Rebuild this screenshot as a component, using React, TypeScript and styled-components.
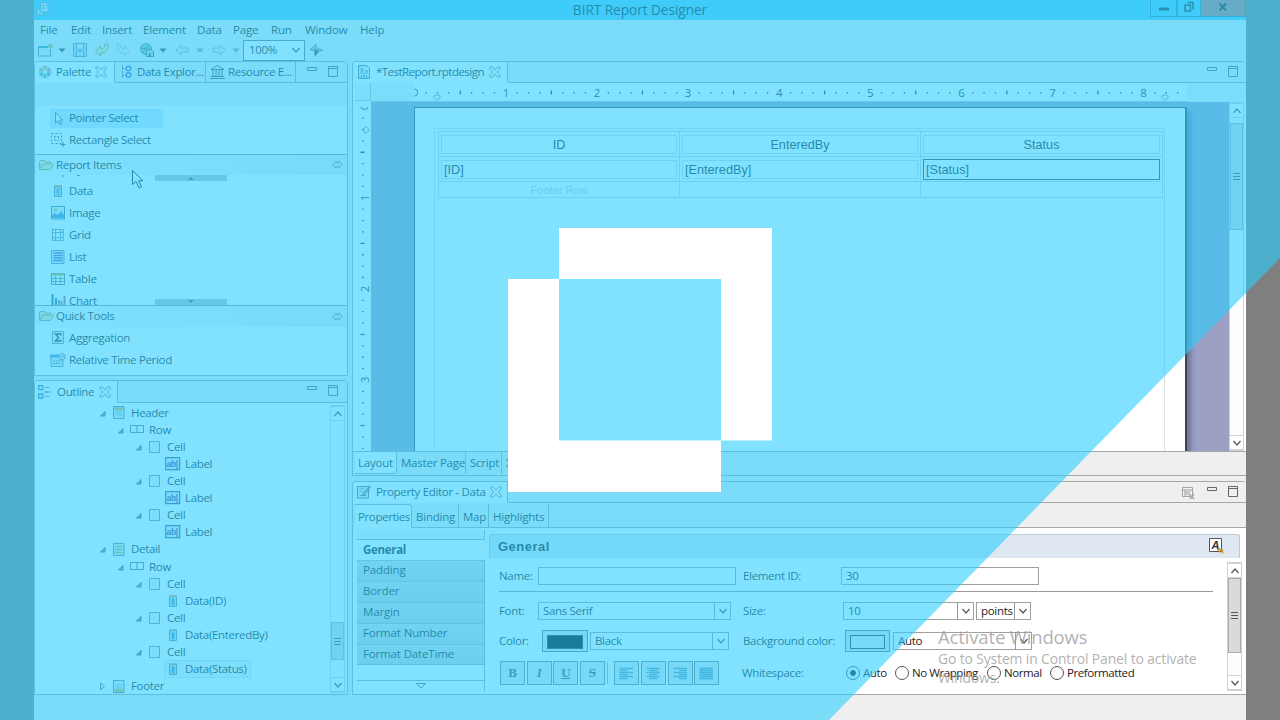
import React from "react";
import styled, { createGlobalStyle, css } from "styled-components";

const GlobalStyle = createGlobalStyle`
  * { box-sizing: border-box; }
  body { margin: 0; overflow: hidden; background: #808080; }
`;

const line = "#a3a8ab";
const chrome = "#efefef";
const ink = "#1f2326";

const Screen = styled.div`
  position: relative;
  width: 1280px;
  height: 720px;
  overflow: hidden;
  display: flex;
  justify-content: center;
  background: #7f7f7f;
  color: ${ink};
  font: 11.5px/16px "Open Sans", "Noto Sans", sans-serif;
  letter-spacing: -0.32px;
  white-space: nowrap;
`;
const Window = styled.div`
  width: 1212px;
  height: 720px;
  display: flex;
  flex-direction: column;
  background: ${chrome};
`;

const TitleBar = styled.header`
  height: 20px;
  display: flex;
  justify-content: space-between;
  background: #5fc8f5;
`;
const TitleSide = styled.div<{ $end?: boolean }>`
  width: 96px;
  display: flex;
  padding: ${(p) => (p.$end ? "0" : "1px 0 0 2px")};
`;
const TitleText = styled.h1`
  margin: 0;
  font-size: 13.7px;
  line-height: 19px;
  font-weight: 400;
  letter-spacing: -0.07px;
`;
const WinButton = styled.div<{ $w: number; $close?: boolean }>`
  width: ${(p) => p.$w}px;
  height: 17px;
  display: flex;
  align-items: center;
  justify-content: center;
  padding-bottom: 2px;
  border: 1px solid #3c86a5;
  border-width: 0 1px 1px ${(p) => (p.$close ? 0 : 1)}px;
  background: ${(p) => (p.$close ? "#bd7872" : "transparent")};
`;

const MenuBar = styled.nav`
  height: 20px;
  display: flex;
  padding-left: 6px;
  line-height: 20px;
  letter-spacing: -0.15px;
`;
const MenuItem = styled.span<{ $w: number }>`
  width: ${(p) => p.$w}px;
`;
const ToolBar = styled.div`
  height: 21px;
  display: flex;
  align-items: center;
  padding: 0 0 1px 4px;
`;
const Tool = styled.span<{ $w: number; $faded?: boolean }>`
  width: ${(p) => p.$w}px;
  height: 16px;
  display: flex;
  opacity: ${(p) => (p.$faded ? 0.55 : 1)};
`;
const ZoomCombo = styled.div`
  width: 62px;
  height: 21px;
  flex: none;
  display: flex;
  align-items: center;
  justify-content: space-between;
  padding: 0 3px 1px 5px;
  margin-right: 4px;
  border: 1px solid #777;
  background: #fff;
`;

const Body = styled.main`
  height: 634px;
  display: flex;
  gap: 4px;
`;
const Column = styled.div<{ $w: number; $gap: number }>`
  width: ${(p) => p.$w}px;
  display: flex;
  flex-direction: column;
  gap: ${(p) => p.$gap}px;
`;
const Panel = styled.section<{ $h: number; $open?: boolean }>`
  height: ${(p) => p.$h}px;
  display: flex;
  flex-direction: column;
  border: 1px solid ${line};
  border-right-width: ${(p) => (p.$open ? 0 : 1)}px;
  border-radius: 4px 4px 0 0;
  background: #fff;
  overflow: hidden;
`;
const TabStrip = styled.div<{ $tall?: boolean }>`
  height: ${(p) => (p.$tall ? 22 : 21)}px;
  flex: none;
  display: flex;
  background: ${chrome};
`;
const Tab = styled.div<{ $w: number; $active?: boolean; $indent?: number; $gap?: number; $tight?: boolean }>`
  width: ${(p) => p.$w}px;
  display: flex;
  align-items: center;
  gap: ${(p) => p.$gap ?? 4}px;
  padding: 0 0 0 ${(p) => p.$indent ?? 5}px;
  letter-spacing: ${(p) => (p.$tight ? "-0.53px" : "inherit")};
  border-right: 1px solid ${line};
  border-bottom: 1px solid ${(p) => (p.$active ? "transparent" : line)};
  background: ${(p) => (p.$active ? "#fff" : "transparent")};
`;
const TabFill = styled.div<{ $pad: number }>`
  flex: 1;
  display: flex;
  justify-content: flex-end;
  gap: 11px;
  padding: 4px ${(p) => p.$pad}px 0 0;
  border-bottom: 1px solid ${line};
`;

const PaletteTop = styled.div`
  height: 23px;
  flex: none;
  background: ${chrome};
`;
const PaletteRow = styled.div<{ $selected?: boolean }>`
  width: 113px;
  height: ${(p) => (p.$selected ? 19 : 21.85)}px;
  flex: none;
  display: flex;
  align-items: center;
  gap: 3px;
  margin: ${(p) => (p.$selected ? "3px 0 1px 15px" : "0 0 0 15px")};
  padding-bottom: ${(p) => (p.$selected ? 1 : 0)}px;
  background: ${(p) => (p.$selected ? "#d6e9fb" : "transparent")};
`;
const PaletteGap = styled.div`
  height: 3px;
  flex: none;
`;
const DrawerHead = styled.div<{ $h: number }>`
  height: ${(p) => p.$h}px;
  flex: none;
  display: flex;
  align-items: center;
  gap: 2px;
  padding: 0 4px 0 4px;
  border-top: 1px solid #8f979c;
  background: linear-gradient(90deg, #fafafa, #e9edf0);
`;
const Grow = styled.span`
  flex: 1;
`;
const DrawerBody = styled.div`
  height: 130px;
  flex: none;
  display: flex;
  flex-direction: column;
  position: relative;
  overflow: hidden;
`;
const DrawerShift = styled.div`
  margin-top: -16.3px;
`;
const ScrollPad = styled.div<{ $bottom?: boolean }>`
  position: absolute;
  left: 120px;
  ${(p) => (p.$bottom ? "bottom: 0" : "top: 0")};
  width: 72px;
  height: 6px;
  display: flex;
  align-items: center;
  justify-content: center;
  background: #b9bfc4;
`;

const OutlineBody = styled.div`
  height: 292px;
  display: flex;
  justify-content: space-between;
  padding: 2px 2px 0 0;
`;
const Tree = styled.div`
  margin-top: -0.7px;
`;
const TreeRow = styled.div<{ $depth: number }>`
  height: 17.08px;
  display: flex;
  align-items: center;
  padding-left: ${(p) => 63.5 + p.$depth * 18}px;
`;
const TreeArrow = styled.span`
  width: 12.5px;
  display: flex;
`;
const TreeItem = styled.span<{ $selected?: boolean }>`
  height: 16px;
  display: flex;
  align-items: center;
  padding-right: 3px;
  outline: ${(p) => (p.$selected ? "1px solid #dde1e4" : "none")};
  background: ${(p) => (p.$selected ? "#f4f5f6" : "transparent")};
`;
const TreeIcon = styled.span<{ $indent: number }>`
  width: 20px;
  display: flex;
  padding-left: ${(p) => p.$indent}px;
`;

const ScrollTrack = styled.div<{ $h: number; $mt?: number }>`
  width: 15px;
  height: ${(p) => p.$h}px;
  margin-top: ${(p) => p.$mt ?? 0}px;
  flex: none;
  display: flex;
  flex-direction: column;
  background: #fdfdfd;
  border: 1px solid #cfd3d6;
`;
const ScrollEnd = styled.div`
  height: 15px;
  flex: none;
  display: flex;
  align-items: center;
  justify-content: center;
  background: #fff;
  border: 1px solid #cfd3d6;
  border-width: 1px 0;
`;
const ScrollThumb = styled.div<{ $h: number; $top: number }>`
  height: ${(p) => p.$h}px;
  margin-top: ${(p) => p.$top}px;
  flex: none;
  display: flex;
  align-items: center;
  justify-content: center;
  border: 1px solid #a9adb0;
  background: #d9dadb;
`;

const EditorTop = styled.div`
  height: 19px;
  flex: none;
  display: flex;
  background: #fff;
`;
const EditorMid = styled.div`
  height: 349px;
  flex: none;
  display: flex;
`;
const Corner = styled.div`
  width: 16px;
  height: 18px;
  margin-left: 2px;
  background: #f3f5f6;
  border: 1px solid #b8bcc0;
  border-width: 0 1px 1px 0;
`;
const Canvas = styled.div`
  width: 858px;
  height: 349px;
  padding: 5px 0 0 43px;
  overflow: hidden;
  background: #9ba0c4;
`;
const Page = styled.div`
  width: 773px;
  height: 360px;
  padding: 20px 20px 0 19px;
  background: #fff;
  border: 2px solid #3f4450;
  border-width: 1px 2px 0 1px;
  box-shadow: 4px 4px 5px #6f7499;
`;
const PageMargin = styled.div`
  height: 360px;
  padding: 2px 1px 0 3px;
  border: 1px solid #dcdfe6;
`;
const ReportTable = styled.div`
  display: grid;
  grid-template-columns: 241px 241px 1fr;
  grid-template-rows: 25px 25px 15px;
  border: 1px solid #cdd1d9;
`;
const TableCell = styled.div<{ $last?: boolean }>`
  padding: 3px 2px 2px;
  border-right: ${(p) => (p.$last ? "0" : "1px solid #cdd1d9")};
  border-bottom: 1px solid #cdd1d9;
`;
const CellBox = styled.div<{ $center?: boolean; $selected?: boolean }>`
  height: ${(p) => (p.$selected ? 21 : 19)}px;
  margin-top: ${(p) => (p.$selected ? -1 : 0)}px;
  padding: 0 2px;
  border: ${(p) => (p.$selected ? "1px solid #444" : "1px solid #d3d7de")};
  text-align: ${(p) => (p.$center ? "center" : "left")};
  font: 12.7px/${(p) => (p.$selected ? 20 : 18)}px "Liberation Sans", Arial, sans-serif;
  letter-spacing: 0;
`;
const FooterCell = styled.div<{ $last?: boolean }>`
  border-right: ${(p) => (p.$last ? "0" : "1px solid #cdd1d9")};
  font: 10.7px/16px "Liberation Sans", Arial, sans-serif;
  letter-spacing: 0.2px;
  text-align: center;
  color: #c4c8cf;
`;

const EditorTabs = styled.div`
  height: 24px;
  display: flex;
  flex: none;
  padding-left: 2px;
  border-top: 1px solid ${line};
  background: ${chrome};
`;
const SmallTab = styled.div<{ $w: number; $active?: boolean; $top?: boolean }>`
  width: ${(p) => p.$w}px;
  height: ${(p) => (p.$top ? 24 : 22)}px;
  flex: none;
  padding-left: ${(p) => (p.$w === 30 ? 4 : 4)}px;
  line-height: ${(p) => (p.$top ? 25 : 22)}px;
  border-right: 1px solid ${line};
  letter-spacing: -0.22px;
  ${(p) =>
    p.$active &&
    css`
      background: #fff;
      border-radius: ${p.$top ? "0 4px 0 0" : "0 0 4px 0"};
      ${p.$top ? "line-height: 23px; padding-left: 3px; letter-spacing: -0.38px;" : "padding-left: 3px;"}
      border-${p.$top ? "top" : "bottom"}: 1px solid ${line};
    `}
  ${(p) => p.$top && !p.$active && css`border-bottom: 1px solid ${line};`}
`;
const SubTabs = styled.div`
  height: 25px;
  flex: none;
  display: flex;
  padding: 1px 0 0 2px;
  background: ${chrome};
`;
const SubFill = styled.div`
  flex: 1;
  border-bottom: 1px solid ${line};
`;
const PropBody = styled.div`
  height: 166px;
  display: flex;
  padding-left: 4px;
`;
const Categories = styled.div`
  width: 128px;
  height: 161px;
  flex: none;
  margin-top: 2px;
  display: flex;
  flex-direction: column;
  border-right: 1px solid ${line};
`;
const CatCap = styled.div`
  height: 10px;
  flex: none;
  background: #f6f6f6;
  border-bottom: 1px solid ${line};
`;
const Category = styled.div<{ $active?: boolean }>`
  height: 20.9px;
  flex: none;
  padding-left: 6px;
  line-height: 18px;
  letter-spacing: -0.15px;
  ${(p) =>
    p.$active
      ? css`height: 20px; line-height: 19px; font-weight: 700; width: 128px; background: #fff; letter-spacing: -0.3px;`
      : css`background: linear-gradient(#d9dcde, #c9cdd0); border-top: 1px solid #aeb3b6;`}
`;
const CatTail = styled.div`
  height: 17px;
  flex: none;
  border: 1px solid ${line};
  border-width: 1px 0;
`;
const CatMore = styled.div`
  display: flex;
  justify-content: center;
  padding-top: 2px;
`;

const Sheet = styled.div`
  width: 751px;
  margin-left: 4px;
  padding-top: 6px;
`;
const SheetHead = styled.div`
  height: 24px;
  display: flex;
  justify-content: space-between;
  padding: 3px 14px 0 8px;
  background: #dfe8f2;
  border: 1px solid #c2cad2;
  border-width: 1px 1px 0 1px;
  border-radius: 3px 3px 0 0;
`;
const SheetTitle = styled.h2`
  margin: 0;
  font: 700 13px/18px "Liberation Sans", Arial, sans-serif;
  letter-spacing: 0.5px;
`;
const SheetBody = styled.div`
  height: 136px;
  display: flex;
`;
const Form = styled.div`
  width: 724px;
  flex: none;
  margin-right: 14px;
  padding-left: 10px;
  display: flex;
  flex-direction: column;
`;
const FormRow = styled.div<{ $h: number; $rule?: boolean }>`
  height: ${(p) => p.$h}px;
  flex: none;
  display: flex;
  align-items: center;
  padding-top: ${(p) => (p.$rule ? 3 : 0)}px;
  border-bottom: ${(p) => (p.$rule ? "1px solid #9a9a9a" : "0")};
`;
const Label = styled.span<{ $w: number }>`
  width: ${(p) => p.$w}px;
  flex: none;
`;
const Field = styled.div<{ $w: number; $mr?: number }>`
  width: ${(p) => p.$w}px;
  height: 18px;
  flex: none;
  display: flex;
  justify-content: space-between;
  margin-right: ${(p) => p.$mr ?? 0}px;
  padding-left: 4px;
  line-height: 16px;
  border: 1px solid #a0a0a0;
  background: #fff;
`;
const DropButton = styled.span`
  width: 16px;
  display: flex;
  align-items: center;
  justify-content: center;
  border-left: 1px solid #999;
`;
const Swatch = styled.div<{ $fill: string; $w: number; $mr: number }>`
  width: ${(p) => p.$w}px;
  height: 22px;
  flex: none;
  padding: 4px;
  margin-right: ${(p) => p.$mr}px;
  border: 1px solid #777;
  background: #e4e6e8;
  &::before {
    content: "";
    display: block;
    height: 12px;
    border: 1px solid #333;
    background: ${(p) => p.$fill};
  }
`;
const FormatButton = styled.div`
  width: 25px;
  height: 24px;
  flex: none;
  display: flex;
  align-items: center;
  justify-content: center;
  margin-right: 1.6px;
  border: 1px solid #808488;
  background: #e8e9ea;
  font: 700 13px/20px "Liberation Serif", serif;
  color: #555;
`;
const Formats = styled.div`
  width: 243px;
  flex: none;
  display: flex;
  padding-left: 1px;
  align-items: center;
`;
const ButtonSep = styled.span`
  width: 1px;
  height: 22px;
  margin: 0 6px 0 1px;
  background: #aaa;
`;
const Radio = styled.span<{ $w: number; $on?: boolean }>`
  width: ${(p) => p.$w}px;
  flex: none;
  display: flex;
  align-items: center;
  gap: 3px;
  letter-spacing: -0.42px;
  &::before {
    content: "";
    width: 12px;
    height: 12px;
    border: 1px solid #555;
    border-radius: 50%;
    background: ${(p) => (p.$on ? "radial-gradient(#222 0 2.5px, #fff 3.2px)" : "#fff")};
  }
`;

const StatusBar = styled.footer`
  height: 25px;
  background: ${chrome};
`;

const Watermark = styled.div`
  position: absolute;
  left: 938px;
  top: 625px;
  width: 280px;
  color: #9d9d9dcc;
  font-size: 13.9px;
  line-height: 19px;
  letter-spacing: -0.12px;
`;
const WatermarkTitle = styled.div`
  font-size: 18.5px;
  line-height: 24px;
  letter-spacing: -0.15px;
`;
const Layer = styled.svg`
  position: absolute;
  left: 0;
  top: 0;
`;
const Cursor = styled.svg`
  position: absolute;
  left: 131px;
  top: 169px;
`;
const Glyph = styled.svg`
  flex: none;
  opacity: 0.88;
`;

const Svg = ({ w = 14, h = 14, children }: { w?: number; h?: number; children: React.ReactNode }) => (
  <Glyph width={w} height={h} viewBox={`0 0 ${w} ${h}`} fill="none" stroke="#555" strokeWidth="1">
    {children}
  </Glyph>
);
const Caret = () => <Svg w={8} h={16}><path d="M.5 6.500h7L4 10.500z" fill="#333" stroke="none" /></Svg>;
const Chevron = ({ up }: { up?: boolean }) => (
  <Svg w={10} h={8}><path d={up ? "M1.500 6l3.500-4 3.500 4" : "M1.500 2l3.500 4 3.500-4"} stroke="#444" strokeWidth="1.300" /></Svg>
);
const CloseX = () => (
  <Svg w={12} h={12}><path d="M1 1h2.500l2.500 3 2.500-3h2.500v2l-2.500 3 2.500 3v2h-2.500l-2.500-3-2.500 3h-2.500v-2l2.500-3-2.500-3z" stroke="#777" strokeWidth=".9" /></Svg>
);
const MinIcon = () => <Svg w={11} h={12}><path d="M1.500 1.500h9v3h-9z" /></Svg>;
const MaxIcon = () => <Svg w={11} h={12}><path d="M.5.5h9v10h-9zM.5 2.500h9" /></Svg>;
const Grip = () => <Svg w={8} h={9}><path d="M0 1.500h7M0 4.500h7M0 7.500h7" stroke="#444" /></Svg>;
const Folder = () => (
  <Svg w={15} h={12}><path d="M.5 10.500v-8l1-1h4l1 1.500h5v2M.5 10.500l3-5.500h11l-3 5.500z" fill="#f4e7b0" stroke="#a09555" /></Svg>
);
const Pin = () => <Svg w={11} h={9}><path d="M4 1L1 4.500l3 3.500 2-2.500M7 1l3 3.500-3 3.500-2-2.500M4 1l2 2.500M7 1L5 3.500" stroke="#777" /></Svg>;
const DataIcon = () => (
  <Svg w={8} h={12}><path d="M.5 1.500h7v10h-7z" fill="#b8d4ea" stroke="#678" /><path d="M0 1h8" stroke="#c58a50" strokeWidth="1.500" /><path d="M4 3.500v6.500" stroke="#3a80b5" strokeWidth="2.500" strokeDasharray="2 .7" /></Svg>
);
const NewIcon = () => (
  <Svg w={16} h={16}><path d="M.5 4.500h12v9.500h-12z" fill="#e8f0f8" stroke="#778" /><path d="M0 5h10" stroke="#48a" strokeWidth="2" /><path d="M12.500 1v6M9.500 4h6M10.500 2l4 4M14.500 2l-4 4" stroke="#c0a850" strokeWidth="1" /></Svg>
);
const SaveIcon = () => (
  <Svg w={16} h={16}><path d="M1.500 1.500h13v13h-13z" fill="#c6d3e4" stroke="#7389a5" /><path d="M4.500 1.500h7v6h-7zM4.500 14v-4.500h7v4.500M8 12v2" fill="#eef" stroke="#7389a5" /></Svg>
);
const UndoIcon = ({ redo }: { redo?: boolean }) => (
  <Svg w={16} h={16}><path transform={redo ? "matrix(-1 0 0 1 16 0)" : undefined} d="M1.500 9l5-5v3c3 0 4.500-2 4.500-5h3c1 6-2.500 9-7.500 9v3z" fill={redo ? "#eee" : "#f8eebb"} stroke={redo ? "#888" : "#a48c3c"} /></Svg>
);
const GlobeIcon = () => (
  <Svg w={16} h={16}><circle cx="7" cy="7" r="5.500" fill="#8fc0a6" stroke="#577" /><path d="M2 6c4 2 7-1 9-3M4 11c1-4 5-5 8-3" stroke="#467" /><path d="M7.500 14.500v-5l3.500-2.500 3.500 2.500v5z" fill="#ccd8e4" stroke="#456" /><path d="M11 15v-4" strokeWidth="2" /></Svg>
);
const ArrowIcon = ({ right }: { right?: boolean }) => (
  <Svg w={15} h={16}><path transform={right ? "matrix(-1 0 0 1 15 0)" : undefined} d="M1 8l5-5v3h7v4H6v3z" fill="#eee" stroke="#667" /></Svg>
);
const FlyIcon = () => (
  <Svg w={16} h={16}><path d="M1 8l6-6v3.500l7 3-5 .5-2 3V9z" fill="#aab2b8" stroke="#778" /><path d="M5.500 6.500v8.500l4.500-5.500z" fill="#333" stroke="none" /></Svg>
);
const PaletteIcon = () => (
  <Svg w={14} h={14}>
    <circle cx="7" cy="7" r="6" fill="#e7eef0" stroke="#abc" />
    {[["7", "3", "#e59a3c"], ["10.500", "5", "#e0645c"], ["10.500", "9", "#5a80cc"], ["7", "11", "#48a870"], ["3.500", "9", "#48a870"], ["3.500", "5", "#b9b040"]].map(([x, y, c], i) => (
      <circle key={i} cx={x} cy={y} r="1.700" fill={c} stroke="none" />
    ))}
  </Svg>
);
const ExplorerIcon = () => (
  <Svg w={13} h={14}><path d="M2.500 0v13M2.500 3.500h4M2.500 10.500h4" strokeDasharray="1.500 1" stroke="#445" /><circle cx="8.500" cy="3.500" r="2.300" stroke="#3f62b5" strokeWidth="1.400" /><circle cx="8.500" cy="10" r="2.300" stroke="#3f62b5" strokeWidth="1.400" /></Svg>
);
const BankIcon = () => (
  <Svg w={15} h={14}><path d="M1 4.500l6.500-4 6.500 4zM0 13.500h15M1 11.500h13M3 5v6.500M6 5v6.500M9 5v6.500M12 5v6.500" stroke="#445" strokeWidth="1" /></Svg>
);
const ReportIcon = () => (
  <Svg w={13} h={14}><path d="M.5.500h8l3 3v10h-11z" fill="#e6eff8" stroke="#556b80" /><path d="M2.500 4h3M2.500 6h3M7 6h3M2.500 8h3M7 8h3" stroke="#567" /><path d="M3.500 12.500v-2M6 12.500v-3M8.500 12.500v-2" stroke="#3a7cc0" strokeWidth="1.500" /></Svg>
);
const PropIcon = () => (
  <Svg w={14} h={14}><path d="M.5 1.500h11v11.500h-11z" fill="#eef2f4" /><path d="M2.500 4h5M2.500 6.500h3M2.500 10.500h7" stroke="#678" /><path d="M13 .5L6 8.500l-1 2.500 2.500-1L13.500 2" fill="#9aa" stroke="#555" /></Svg>
);
const OutlineIcon = () => (
  <Svg w={14} h={14}><path d="M.7.700h4v4h-4zM.7 9h4v4h-4z" stroke="#3769a8" strokeWidth="1.300" /><path d="M7 2.500h5M6 7h1M10 7h3M7 11.500h5" stroke="#58a" /><path d="M7.500 7h2" stroke="#369" strokeWidth="2" /></Svg>
);
const PointerIcon = () => <Svg w={16} h={15}><path d="M5.500 1.500v10.500l2.500-2.300 2 4 1.800-.9-2-3.800h3.200z" fill="#fff" stroke="#556" /></Svg>;
const RectIcon = () => (
  <Svg w={16} h={15}><path d="M1.500 1.500h10v10h-10z" strokeDasharray="2 2" stroke="#445" /><path d="M4.500 4.500h4v4h-4z" strokeDasharray="1.500 1" /><path d="M13 10v5M10.500 12.500h5" stroke="#345" /></Svg>
);
const ImageIcon = () => (
  <Svg w={15} h={14}><path d="M.5.500h13v12.500h-13z" fill="#e9f4fc" stroke="#446a88" /><path d="M1 12V9l3-2 3 2 3-4 3 4v3z" fill="#4487bd" stroke="none" /><circle cx="4.500" cy="4" r="1.500" fill="#e5c050" stroke="#887" strokeWidth=".5" /></Svg>
);
const GridIcon = () => (
  <Svg w={14} h={14}><path d="M1.500 1.500h11v11h-11z" stroke="#446" strokeDasharray="2 1" /><path d="M4.500 1v12M9.500 1v12M1 4.500h12M1 9.500h12" stroke="#6a90b0" /></Svg>
);
const ListIcon = () => (
  <Svg w={14} h={14}><path d="M.5.500h12.500v13h-12.500z" fill="#e3e4f8" stroke="#6877a5" /><path d="M2.500 3h9M2.500 5.500h9M2.500 8h9M2.500 10.500h9" stroke="#5258b8" strokeWidth="1.300" /></Svg>
);
const TableIcon = () => (
  <Svg w={14} h={13}><path d="M.5 1.500h13v11h-13z" fill="#fff" stroke="#667" /><path d="M1 2.500h12" stroke="#c0a540" strokeWidth="2" /><path d="M4.500 4v8M9.500 4v8M1 6.500h12M1 9.500h12" stroke="#688" /></Svg>
);
const ChartIcon = () => (
  <Svg w={15} h={14}><path d="M1.500 0v14M5 4v10" stroke="#3567a5" strokeWidth="2.200" /><path d="M8 6v8" stroke="#466" strokeWidth="1.500" /><path d="M10.500 7v7M13.500 2v12" stroke="#a05068" strokeWidth="1.800" /></Svg>
);
const SumIcon = () => (
  <Svg w={14} h={13}><path d="M1.500.5h11v12h-11z" fill="#edf0f2" stroke="#778" /><path d="M9.800 4.500V3H4.500l3 3.500-3 3.500h5.300V8.500" stroke="#223" strokeWidth="1.500" /></Svg>
);
const TimeIcon = () => (
  <Svg w={16} h={14}><path d="M1 3.500h12v10H1z" fill="#dde9f5" stroke="#5a88b0" /><path d="M0 3h9" stroke="#4a8ac0" strokeWidth="3" /><path d="M3 8h8M3 10.500h8" strokeDasharray="1.500 1" /><circle cx="12" cy="3.800" r="3.200" fill="#f4f6fa" stroke="#678" /><path d="M10.500 3l1.500 1.500L14 2.500" /></Svg>
);
const treeIndent: Record<string, number> = { Header: 2, Detail: 2, Footer: 2, Row: 1, Cell: 2, Label: 0, Data: 0 };
const TreeGlyph = ({ kind }: { kind: string }) => {
  if (kind === "Row") return <Svg w={15} h={10}><path d="M.5.500h13v7h-13zM7 .5v7" stroke="#567" /></Svg>;
  if (kind === "Cell") return <Svg w={12} h={12}><path d="M.5.500h10v11h-10z" fill="#eef4f8" stroke="#778" /></Svg>;
  if (kind === "Label")
    return (
      <svg width="16" height="14" viewBox="0 0 16 14">
        <path d="M.7.700h14v12h-14z" fill="#f0f2fb" stroke="#355c90" strokeWidth="1.200" />
        <text x="1.500" y="10" fontSize="8.500" fontWeight="700" fontFamily="Liberation Sans" fill="#5a3d9a">ab|</text>
      </svg>
    );
  if (kind === "Data") return <Svg w={12} h={12}><g transform="translate(4 0)"><path d="M.5 1.500h7v10h-7z" fill="#b8d4ea" stroke="#678" /><path d="M0 1h8" stroke="#c58a50" strokeWidth="1.500" /><path d="M4 3.500v6.500" stroke="#3a80b5" strokeWidth="2.500" /></g></Svg>;
  const y = kind === "Header" ? 2.5 : 10.5;
  return (
    <Svg w={12} h={13}>
      <path d="M.5.500h10.500v12h-10.500z" fill="#e2eaf4" stroke="#5c7388" />
      {kind === "Detail" ? (
        <path d="M2 3.500h7.500M2 6.500h7.500M2 9.500h7.500" stroke="#c8a22c" strokeWidth="1.600" />
      ) : (
        <>
          <path d="M2.500 5h6.500M2.500 7h6.500M2.500 9h6.500" stroke="#9bb" />
          <path d={`M1.500 ${y}h8.500`} stroke="#d0aa34" strokeWidth="2.500" />
        </>
      )}
    </Svg>
  );
};
const AlignIcon = ({ kind }: { kind: number }) => (
  <Svg w={15} h={13}>
    {[0, 1, 2, 3, 4, 5].map((i) => {
      const short = i % 2 === 1 && kind < 3;
      const a = !short || kind === 0 ? 0.5 : kind === 1 ? 3 : 6;
      const b = !short || kind === 2 ? 14 : kind === 1 ? 11.5 : 8.5;
      return <path key={i} d={`M${a} ${1.5 + i * 2}H${b}`} stroke="#5d8fb5" strokeWidth={kind === 3 ? 1.8 : 1.5} />;
    })}
  </Svg>
);

const INCH = 91.1;
const HorizontalRuler = () => (
  <svg width="875" height="19" viewBox="371 83 875 19">
    <path d="M371 83h43v18h-43zM1187 83h59v19h-59z" fill="#f1f2f3" />
    <path d="M371 101.500h816" stroke="#b8bcc0" />
    {Array.from({ length: 68 }, (_, i) => {
      const x = 414.7 + (i * INCH) / 8;
      if (i % 8 === 0)
        return i === 0 ? (
          <path key={i} d="M414.500 89c4 0 4 7 0 7" fill="none" stroke="#333" />
        ) : (
          <text key={i} x={x} y="96.500" fontSize="11.500" textAnchor="middle" fill="#333">{i / 8}</text>
        );
      return <path key={i} d={i % 8 === 4 ? `M${x} 90.500v4` : `M${x} 92v1.600`} stroke="#333" strokeWidth="1.300" />;
    })}
    {[437, 1165].map((x) => <path key={x} d={`M${x - 2} 95h4l1.500 2-3.500 3.500-3.500-3.500z`} fill="#fff" stroke="#777" strokeWidth=".8" />)}
  </svg>
);
const VerticalRuler = () => (
  <svg width="18" height="349" viewBox="353 102 18 349">
    {Array.from({ length: 31 }, (_, i) => {
      const y = 106.7 + (i * INCH) / 8;
      if (i === 0) return <path key={i} d="M361 107c0 3 7 3 7 0" fill="none" stroke="#333" />;
      if (i % 8 === 0)
        return <text key={i} transform={`translate(368.500 ${y}) rotate(-90)`} fontSize="11" textAnchor="middle" fill="#333">{i / 8}</text>;
      return <path key={i} d={i % 8 === 4 ? `M360.500 ${y}h4` : `M362 ${y}h1.600`} stroke="#333" strokeWidth="1.300" />;
    })}
    <path d="M364 128v4l2 1.500 3.500-3.500-3.500-3.500z" fill="#fff" stroke="#777" strokeWidth=".8" />
  </svg>
);

const menus: [string, number][] = [["File", 31], ["Edit", 31], ["Insert", 41], ["Element", 54], ["Data", 36], ["Page", 38], ["Run", 34], ["Window", 55], ["Help", 40]];
const tree: [number, string, string][] = [
  [0, "Header", "Header"], [1, "Row", "Row"],
  [2, "Cell", "Cell"], [3, "Label", "Label"], [2, "Cell", "Cell"], [3, "Label", "Label"], [2, "Cell", "Cell"], [3, "Label", "Label"],
  [0, "Detail", "Detail"], [1, "Row", "Row"],
  [2, "Cell", "Cell"], [3, "Data", "Data(ID)"], [2, "Cell", "Cell"], [3, "Data", "Data(EnteredBy)"], [2, "Cell", "Cell"], [3, "Data", "Data(Status)"],
  [0, "Footer", "Footer"],
];
const items: [React.ReactNode, string][] = [
  [<RectIcon />, "Dynamic Text"], [<DataIcon />, "Data"], [<ImageIcon />, "Image"], [<GridIcon />, "Grid"],
  [<ListIcon />, "List"], [<TableIcon />, "Table"], [<ChartIcon />, "Chart"],
];
const PaletteIconBox = styled.span`
  width: 16px;
  display: flex;
  justify-content: center;
`;
const PaletteItem = ({ icon, label, selected }: { icon: React.ReactNode; label: string; selected?: boolean }) => (
  <PaletteRow $selected={selected}><PaletteIconBox>{icon}</PaletteIconBox>{label}</PaletteRow>
);
const Drawer = ({ label, h }: { label: string; h: number }) => (
  <DrawerHead $h={h}><Folder />{label}<Grow /><Pin /></DrawerHead>
);
const Scrollbar = ({ h, top, thumb, mt }: { h: number; top: number; thumb: number; mt?: number }) => (
  <ScrollTrack $h={h} $mt={mt}>
    <ScrollEnd><Chevron up /></ScrollEnd>
    <ScrollThumb $h={thumb} $top={top}><Grip /></ScrollThumb>
    <Grow />
    <ScrollEnd><Chevron /></ScrollEnd>
  </ScrollTrack>
);
const Combo = ({ w, mr, children }: { w: number; mr?: number; children: string }) => (
  <Field $w={w} $mr={mr}>{children}<DropButton><Chevron /></DropButton></Field>
);

export default function App() {
  return (
    <Screen>
      <GlobalStyle />
      <Window>
        <TitleBar>
          <TitleSide>
            <Svg w={16} h={16}><path d="M4.500 1.500h6l2.500 2.500v7h-8.500z" fill="#dce8ee" stroke="#89a" /><path d="M.5 6v8.500h8.500z" fill="#cdd8dd" stroke="#89a" /><path d="M6.500 4.500h2M10 4.500h1.500M6.500 7h2M10 7h1.500" stroke="#678" /></Svg>
          </TitleSide>
          <TitleText>BIRT Report Designer</TitleText>
          <TitleSide $end>
            <WinButton $w={27}><Svg w={10} h={10}><path d="M0 7h10" stroke="#222" strokeWidth="3" /></Svg></WinButton>
            <WinButton $w={24}><Svg w={10} h={12}><path d="M1 4h5.500v6H1zM3.500 1.500h5.500v7" stroke="#222" strokeWidth="1.500" /></Svg></WinButton>
            <WinButton $w={45} $close><Svg w={10} h={10}><path d="M1.500 1.500l6.500 7M8 1.500l-6.500 7" stroke="#222" strokeWidth="2" /></Svg></WinButton>
          </TitleSide>
        </TitleBar>
        <MenuBar>{menus.map(([m, w]) => <MenuItem key={m} $w={w}>{m}</MenuItem>)}</MenuBar>
        <ToolBar>
          <Tool $w={20}><NewIcon /></Tool><Tool $w={14}><Caret /></Tool>
          <Tool $w={22}><SaveIcon /></Tool>
          <Tool $w={21}><UndoIcon /></Tool>
          <Tool $w={24} $faded><UndoIcon redo /></Tool>
          <Tool $w={20}><GlobeIcon /></Tool><Tool $w={16}><Caret /></Tool>
          <Tool $w={21} $faded><ArrowIcon /></Tool><Tool $w={15} $faded><Caret /></Tool>
          <Tool $w={21} $faded><ArrowIcon right /></Tool><Tool $w={11} $faded><Caret /></Tool>
          <ZoomCombo>100%<Chevron /></ZoomCombo>
          <FlyIcon />
        </ToolBar>
        <Body>
          <Column $w={314} $gap={4}>
            <Panel $h={315}>
              <TabStrip>
                <Tab $w={80} $active $indent={3} $gap={4}><PaletteIcon />Palette<CloseX /></Tab>
                <Tab $w={91} $gap={4}><ExplorerIcon />Data Explor...</Tab>
                <Tab $w={90} $indent={4} $gap={3}><BankIcon />Resource E...</Tab>
                <TabFill $pad={8}><MinIcon /><MaxIcon /></TabFill>
              </TabStrip>
              <PaletteTop />
              <PaletteItem icon={<PointerIcon />} label="Pointer Select" selected />
              <PaletteItem icon={<RectIcon />} label="Rectangle Select" />
              <PaletteGap />
              <Drawer label="Report Items" h={21} />
              <DrawerBody>
                <DrawerShift>
                  {items.map(([icon, label]) => <PaletteItem key={label} icon={icon} label={label} />)}
                </DrawerShift>
                <ScrollPad><Svg w={6} h={4}><path d="M0 4l3-3 3 3z" fill="#555" stroke="none" /></Svg></ScrollPad>
                <ScrollPad $bottom><Svg w={6} h={4}><path d="M0 0l3 3 3-3z" fill="#555" stroke="none" /></Svg></ScrollPad>
              </DrawerBody>
              <Drawer label="Quick Tools" h={22} />
              <PaletteItem icon={<SumIcon />} label="Aggregation" />
              <PaletteItem icon={<TimeIcon />} label="Relative Time Period" />
            </Panel>
            <Panel $h={315}>
              <TabStrip $tall>
                <Tab $w={83} $active $indent={3} $gap={5}><OutlineIcon />Outline<CloseX /></Tab>
                <TabFill $pad={8}><MinIcon /><MaxIcon /></TabFill>
              </TabStrip>
              <OutlineBody>
                <Tree>
                  {tree.map(([d, kind, label], i) => (
                    <TreeRow key={i} $depth={d}>
                      <TreeArrow>
                        {d < 3 && (kind === "Footer"
                          ? <Svg w={7} h={9}><path d="M1.500 1v7l4-3.500z" /></Svg>
                          : <Svg w={8} h={8}><path d="M6 2.500v4.500h-4.500z" fill="#888" stroke="#444" /></Svg>)}
                      </TreeArrow>
                      <TreeItem $selected={label === "Data(Status)"}>
                        <TreeIcon $indent={treeIndent[kind]}><TreeGlyph kind={kind} /></TreeIcon>{label}
                      </TreeItem>
                    </TreeRow>
                  ))}
                </Tree>
                <Scrollbar h={288} top={201} thumb={38} />
              </OutlineBody>
            </Panel>
          </Column>
          <Column $w={894} $gap={5}>
            <Panel $h={415} $open>
              <TabStrip>
                <Tab $w={155} $active $gap={5} $tight><ReportIcon />*TestReport.rptdesign<CloseX /></Tab>
                <TabFill $pad={7}><MinIcon /><MaxIcon /></TabFill>
              </TabStrip>
              <EditorTop><Corner /><HorizontalRuler /></EditorTop>
              <EditorMid>
                <VerticalRuler />
                <Canvas>
                  <Page>
                    <PageMargin>
                      <ReportTable>
                        <TableCell><CellBox $center>ID</CellBox></TableCell>
                        <TableCell><CellBox $center>EnteredBy</CellBox></TableCell>
                        <TableCell $last><CellBox $center>Status</CellBox></TableCell>
                        <TableCell><CellBox>[ID]</CellBox></TableCell>
                        <TableCell><CellBox>[EnteredBy]</CellBox></TableCell>
                        <TableCell $last><CellBox $selected>[Status]</CellBox></TableCell>
                        <FooterCell>Footer Row</FooterCell>
                        <FooterCell />
                        <FooterCell $last />
                      </ReportTable>
                    </PageMargin>
                  </Page>
                </Canvas>
                <Scrollbar h={349} top={5} thumb={107} />
              </EditorMid>
              <EditorTabs>
                <SmallTab $w={42} $active>Layout</SmallTab>
                <SmallTab $w={69}>Master Page</SmallTab>
                <SmallTab $w={36}>Script</SmallTab>
                <SmallTab $w={68}>XML Source</SmallTab>
              </EditorTabs>
            </Panel>
            <Panel $h={214} $open>
              <TabStrip>
                <Tab $w={155} $active $indent={4} $gap={5}><PropIcon />Property Editor - Data<CloseX /></Tab>
                <TabFill $pad={7}>
                  <Svg w={14} h={14}><path d="M1.500 1.500h10v9h-10zM1.500 4h10M4 6h5M4 8h4M4 4v7" stroke="#999" /><path d="M8 8l5 5M13 8l-4 5" stroke="#999" strokeWidth="1.300" /></Svg>
                  <MinIcon /><MaxIcon />
                </TabFill>
              </TabStrip>
              <SubTabs>
                <SmallTab $top $w={57} $active>Properties</SmallTab>
                <SmallTab $top $w={47}>Binding</SmallTab>
                <SmallTab $top $w={30}>Map</SmallTab>
                <SmallTab $top $w={60}>Highlights</SmallTab>
                <SubFill />
              </SubTabs>
              <PropBody>
                <Categories>
                  <CatCap />
                  <Category $active>General</Category>
                  {["Padding", "Border", "Margin", "Format Number", "Format DateTime"].map((c) => <Category key={c}>{c}</Category>)}
                  <CatTail />
                  <CatMore><Svg w={10} h={6}><path d="M.5.500h9L5 5z" /></Svg></CatMore>
                </Categories>
                <Sheet>
                  <SheetHead>
                    <SheetTitle>General</SheetTitle>
                    <svg width="16" height="16" viewBox="0 0 16 16">
                      <path d="M.5.500h12v13H.5z" fill="#fff" stroke="#555" />
                      <text x="2.500" y="11" fontSize="11" fontWeight="700" fontStyle="italic" fontFamily="Liberation Sans" fill="#333">A</text>
                      <path d="M8 12h6M10.500 10v4.500M13.500 12v3.500" stroke="#d09a2c" strokeWidth="1.600" />
                    </svg>
                  </SheetHead>
                  <SheetBody>
                    <Form>
                      <FormRow $h={34} $rule>
                        <Label $w={39}>Name:</Label><Field $w={198} $mr={7} />
                        <Label $w={98}>Element ID:</Label><Field $w={198}>30</Field>
                      </FormRow>
                      <FormRow $h={37}>
                        <Label $w={39}>Font:</Label><Combo w={193} mr={12}>Sans Serif</Combo>
                        <Label $w={100}>Size:</Label><Combo w={131} mr={2}>10</Combo><Combo w={55}>points</Combo>
                      </FormRow>
                      <FormRow $h={23}>
                        <Label $w={43}>Color:</Label><Swatch $fill="#000" $w={46} $mr={2} /><Combo w={139} mr={14}>Black</Combo>
                        <Label $w={102}>Background color:</Label><Swatch $fill="#e9ebed" $w={45} $mr={3} /><Combo w={139}>Auto</Combo>
                      </FormRow>
                      <FormRow $h={42}>
                        <Formats>
                          <FormatButton>B</FormatButton>
                          <FormatButton><i>I</i></FormatButton>
                          <FormatButton><u>U</u></FormatButton>
                          <FormatButton><s>S</s></FormatButton>
                          <ButtonSep />
                          {[0, 1, 2, 3].map((k) => <FormatButton key={k}><AlignIcon kind={k} /></FormatButton>)}
                        </Formats>
                        <Label $w={104}>Whitespace:</Label>
                        <Radio $w={49} $on>Auto</Radio><Radio $w={92}>No Wrapping</Radio><Radio $w={63}>Normal</Radio><Radio $w={90}>Preformatted</Radio>
                      </FormRow>
                    </Form>
                    <Scrollbar h={129} mt={4} top={0} thumb={75} />
                  </SheetBody>
                </Sheet>
              </PropBody>
            </Panel>
          </Column>
        </Body>
        <StatusBar />
      </Window>
      <Watermark>
        <WatermarkTitle>Activate Windows</WatermarkTitle>
        <div>Go to System in Control Panel to activate</div>
        <div>Windows.</div>
      </Watermark>
      <Cursor width="16" height="22" viewBox="0 0 16 22">
        <path d="M1.500 1.500v14l3.500-3 3 6.500 2.500-1.200-2.800-6h4.300z" fill="#fff" stroke="#222" />
      </Cursor>
      <Layer width="1280" height="720" viewBox="0 0 1280 720">
        <path d="M0 0H1280V258L829 720H0Z" fill="rgba(43,207,255,0.6)" />
        <path d="M559 228H772V440.500H559ZM508 279H721V492H508Z" fill="#fff" fillRule="evenodd" />
        <path d="M559.500 279.500H720.500V440H559.500Z" fill="#80e2ff" />
      </Layer>
    </Screen>
  );
}
